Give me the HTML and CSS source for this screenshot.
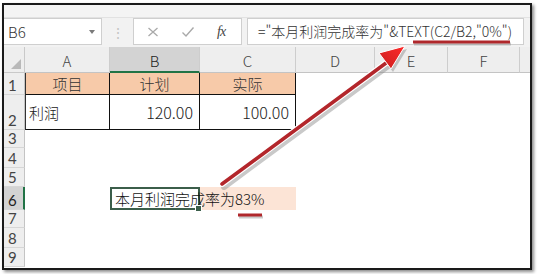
FILE: index.html
```html
<!DOCTYPE html>
<html lang="zh">
<head>
<meta charset="utf-8">
<link rel="stylesheet" href="styles.css">
</head>
<body>
<div class="frame">
  <div class="ribbon"></div>
  <div class="fbar">
    <div class="namebox"><span class="ref">B6</span><span class="dd"></span></div>
    <div class="dots">⋮</div>
    <div class="fxbox">
      <svg class="ico" width="12" height="12" viewBox="0 0 12 12"><path d="M1.5 2 L10.5 10 M10.5 2 L1.5 10" stroke="#a9a9a9" stroke-width="1.3" fill="none"/></svg>
      <svg class="ico" width="14" height="12" viewBox="0 0 14 12"><path d="M1.5 6.5 L5 10 L12.5 1.5" stroke="#a9a9a9" stroke-width="1.4" fill="none"/></svg>
      <span class="fx">fx</span>
    </div>
    <div class="formula">="本月利润完成率为"&amp;TEXT(C2/B2,"0%")</div>
  </div>
  <div class="sheet">
    <div class="corner"><div class="tri"></div></div>
    <div class="ch">A</div><div class="ch sel">B</div><div class="ch">C</div><div class="ch">D</div><div class="ch">E</div><div class="ch">F</div><div class="ch last"></div>

    <div class="rh">1</div>
    <div class="c b hd first">项目</div><div class="c b hd">计划</div><div class="c b hd">实际</div><div class="c"></div><div class="c"></div><div class="c"></div><div class="c"></div>

    <div class="rh">2</div>
    <div class="c b first txt">利润</div><div class="c b num">120.00</div><div class="c b num">100.00</div><div class="c"></div><div class="c"></div><div class="c"></div><div class="c"></div>

    <div class="rh">3</div>
    <div class="c"></div><div class="c"></div><div class="c"></div><div class="c"></div><div class="c"></div><div class="c"></div><div class="c"></div>

    <div class="rh">4</div>
    <div class="c"></div><div class="c"></div><div class="c"></div><div class="c"></div><div class="c"></div><div class="c"></div><div class="c"></div>

    <div class="rh">5</div>
    <div class="c"></div><div class="c"></div><div class="c"></div><div class="c"></div><div class="c"></div><div class="c"></div><div class="c"></div>

    <div class="rh sel">6</div>
    <div class="c"></div><div class="c active">本月利润完成率为83%<span class="handle"></span></div><div class="c peach"></div><div class="c"></div><div class="c"></div><div class="c"></div><div class="c"></div>

    <div class="rh">7</div>
    <div class="c"></div><div class="c"></div><div class="c"></div><div class="c"></div><div class="c"></div><div class="c"></div><div class="c"></div>

    <div class="rh">8</div>
    <div class="c"></div><div class="c"></div><div class="c"></div><div class="c"></div><div class="c"></div><div class="c"></div><div class="c"></div>

    <div class="rh">9</div>
    <div class="c"></div><div class="c"></div><div class="c"></div><div class="c"></div><div class="c"></div><div class="c"></div><div class="c"></div>
  </div>
</div>
<svg class="overlay" width="538" height="274" viewBox="0 0 538 274">
  <defs>
    <linearGradient id="hg" x1="0" y1="1" x2="1" y2="0">
      <stop offset="0" stop-color="#c81e1e"/>
      <stop offset="1" stop-color="#ff2a2a"/>
    </linearGradient>
  </defs>
  <line x1="414" y1="44" x2="511" y2="44" stroke="#999" stroke-width="3" opacity="0.5"/>
  <line x1="413" y1="42" x2="510" y2="42" stroke="#b0282c" stroke-width="3"/>
  <line x1="239" y1="217" x2="263" y2="217" stroke="#999" stroke-width="3" opacity="0.5"/>
  <line x1="238" y1="215" x2="262" y2="215" stroke="#b0282c" stroke-width="3"/>
  <line x1="224" y1="187" x2="388" y2="66" stroke="#888" stroke-width="6" opacity="0.45" stroke-linecap="round"/>
  <polygon points="407,49 393,72 381,56" fill="#888" opacity="0.45"/>
  <line x1="222" y1="184" x2="386" y2="63" stroke="#fff" stroke-width="6" stroke-linecap="round"/>
  <line x1="222" y1="184" x2="386" y2="63" stroke="#b3262b" stroke-width="3.6" stroke-linecap="round"/>
  <polygon points="405,46 391,69 379,53" fill="url(#hg)" stroke="#fff" stroke-width="1"/>
</svg>
</body>
</html>
```

FILE: styles.css
```css
html, body {
  margin: 0;
  padding: 0;
  background: #ffffff;
}
body {
  position: relative;
  width: 538px;
  height: 274px;
  overflow: hidden;
  font-family: "Noto Sans CJK SC", "Noto Sans", sans-serif;
  font-weight: 300;
  color: #222;
}
.frame {
  box-sizing: border-box;
  margin: 3px 0 0 2px;
  width: 530px;
  height: 267px;
  border: 2px solid #1a1a1a;
  box-shadow: 2px 2px 3px rgba(0, 0, 0, 0.45);
  background: #f2f2f2;
  display: flex;
  flex-direction: column;
  overflow: hidden;
}
.ribbon {
  height: 12px;
  background: #f4f4f4;
  border-bottom: 1px solid #e2e2e2;
  flex: none;
}
.fbar {
  height: 29px;
  flex: none;
  display: flex;
  align-items: flex-start;
  background: #f2f2f2;
}
.namebox {
  box-sizing: border-box;
  width: 98px;
  height: 27px;
  background: #fff;
  border: 1px solid #cfcfcf;
  border-left: none;
  display: flex;
  align-items: center;
  justify-content: space-between;
  padding: 0 6px 0 4px;
}
.ref {
  font-size: 15px;
  color: #333;
  line-height: 1;
}
.dd {
  width: 0;
  height: 0;
  border-left: 3.5px solid transparent;
  border-right: 3.5px solid transparent;
  border-top: 4px solid #7a7a7a;
}
.dots {
  width: 31px;
  height: 27px;
  display: flex;
  align-items: center;
  justify-content: center;
  color: #c4c4c4;
  font-size: 14px;
}
.fxbox {
  box-sizing: border-box;
  width: 109px;
  height: 27px;
  background: #fff;
  border: 1px solid #cfcfcf;
  display: flex;
  align-items: center;
  padding-left: 13px;
  gap: 22px;
}
.fx {
  font-family: "Liberation Serif", serif;
  font-style: italic;
  font-weight: 400;
  font-size: 14px;
  color: #444;
  letter-spacing: -1px;
}
.formula {
  box-sizing: border-box;
  margin-left: 5px;
  width: 277px;
  height: 27px;
  background: #fff;
  border: 1px solid #cfcfcf;
  padding-left: 10px;
  font-size: 14px;
  line-height: 25px;
  color: #333;
  white-space: nowrap;
  overflow: hidden;
}
.sheet {
  flex: 1;
  display: grid;
  grid-template-columns: 21px 85px 90px 96px 79px 73px 72px 1fr;
  grid-template-rows: 26px 22px 35px 18px 20px 19px 23px 18px 20px 19px 1fr;
  background: #fff;
}
.corner {
  box-sizing: border-box;
  background: #eeeeee;
  border-right: 1px solid #c9c9c9;
  border-bottom: 1px solid #c9c9c9;
  display: flex;
  justify-content: flex-end;
  align-items: flex-end;
  padding: 0 3px 3px 0;
}
.tri {
  width: 0;
  height: 0;
  border-left: 10px solid transparent;
  border-bottom: 10px solid #b9b9b9;
}
.ch {
  box-sizing: border-box;
  background: #eeeeee;
  border-right: 1px solid #cdcdcd;
  border-bottom: 1px solid #c4c4c4;
  display: flex;
  align-items: center;
  justify-content: center;
  font-size: 15px;
  color: #444;
  padding-top: 2px;
}
.ch.sel {
  background: #d3d3d3;
  border-bottom: 2px solid #217346;
  color: #222;
}
.ch.last {
  border-right: none;
}
.rh {
  box-sizing: border-box;
  background: #eeeeee;
  border-right: 1px solid #c4c4c4;
  border-bottom: 1px solid #d6d6d6;
  display: flex;
  align-items: flex-end;
  padding: 0 0 1px 4px;
  font-family: "Lato", "Liberation Sans", sans-serif;
  font-weight: 400;
  font-size: 15px;
  line-height: 15px;
  color: #444;
  overflow: hidden;
}
.rh.sel {
  background: #d3d3d3;
  border-right: 2px solid #217346;
  color: #222;
}
.c {
  box-sizing: border-box;
  display: flex;
  align-items: center;
  font-size: 15px;
  white-space: nowrap;
  min-width: 0;
}
.c.b {
  border-right: 1px solid #111;
  border-bottom: 1px solid #111;
}
.c.first {
  border-left: 1px solid #333;
}
.c.hd {
  background: #f7caa9;
  justify-content: center;
  color: #333;
}
.c.txt {
  padding-left: 3px;
  color: #222;
}
.c.num {
  justify-content: flex-end;
  padding-right: 6px;
  font-size: 16px;
  color: #222;
}
.c.peach {
  background: #fce4d6;
}
.c.active {
  position: relative;
  z-index: 2;
  border: 2px solid #3b5e4a;
  padding-left: 3px;
  overflow: visible;
  color: #111;
}
.handle {
  position: absolute;
  right: -4px;
  bottom: -4px;
  width: 5px;
  height: 5px;
  background: #3b5e4a;
  border: 1px solid #fff;
}
.overlay {
  position: absolute;
  left: 0;
  top: 0;
  pointer-events: none;
  z-index: 5;
}
```
